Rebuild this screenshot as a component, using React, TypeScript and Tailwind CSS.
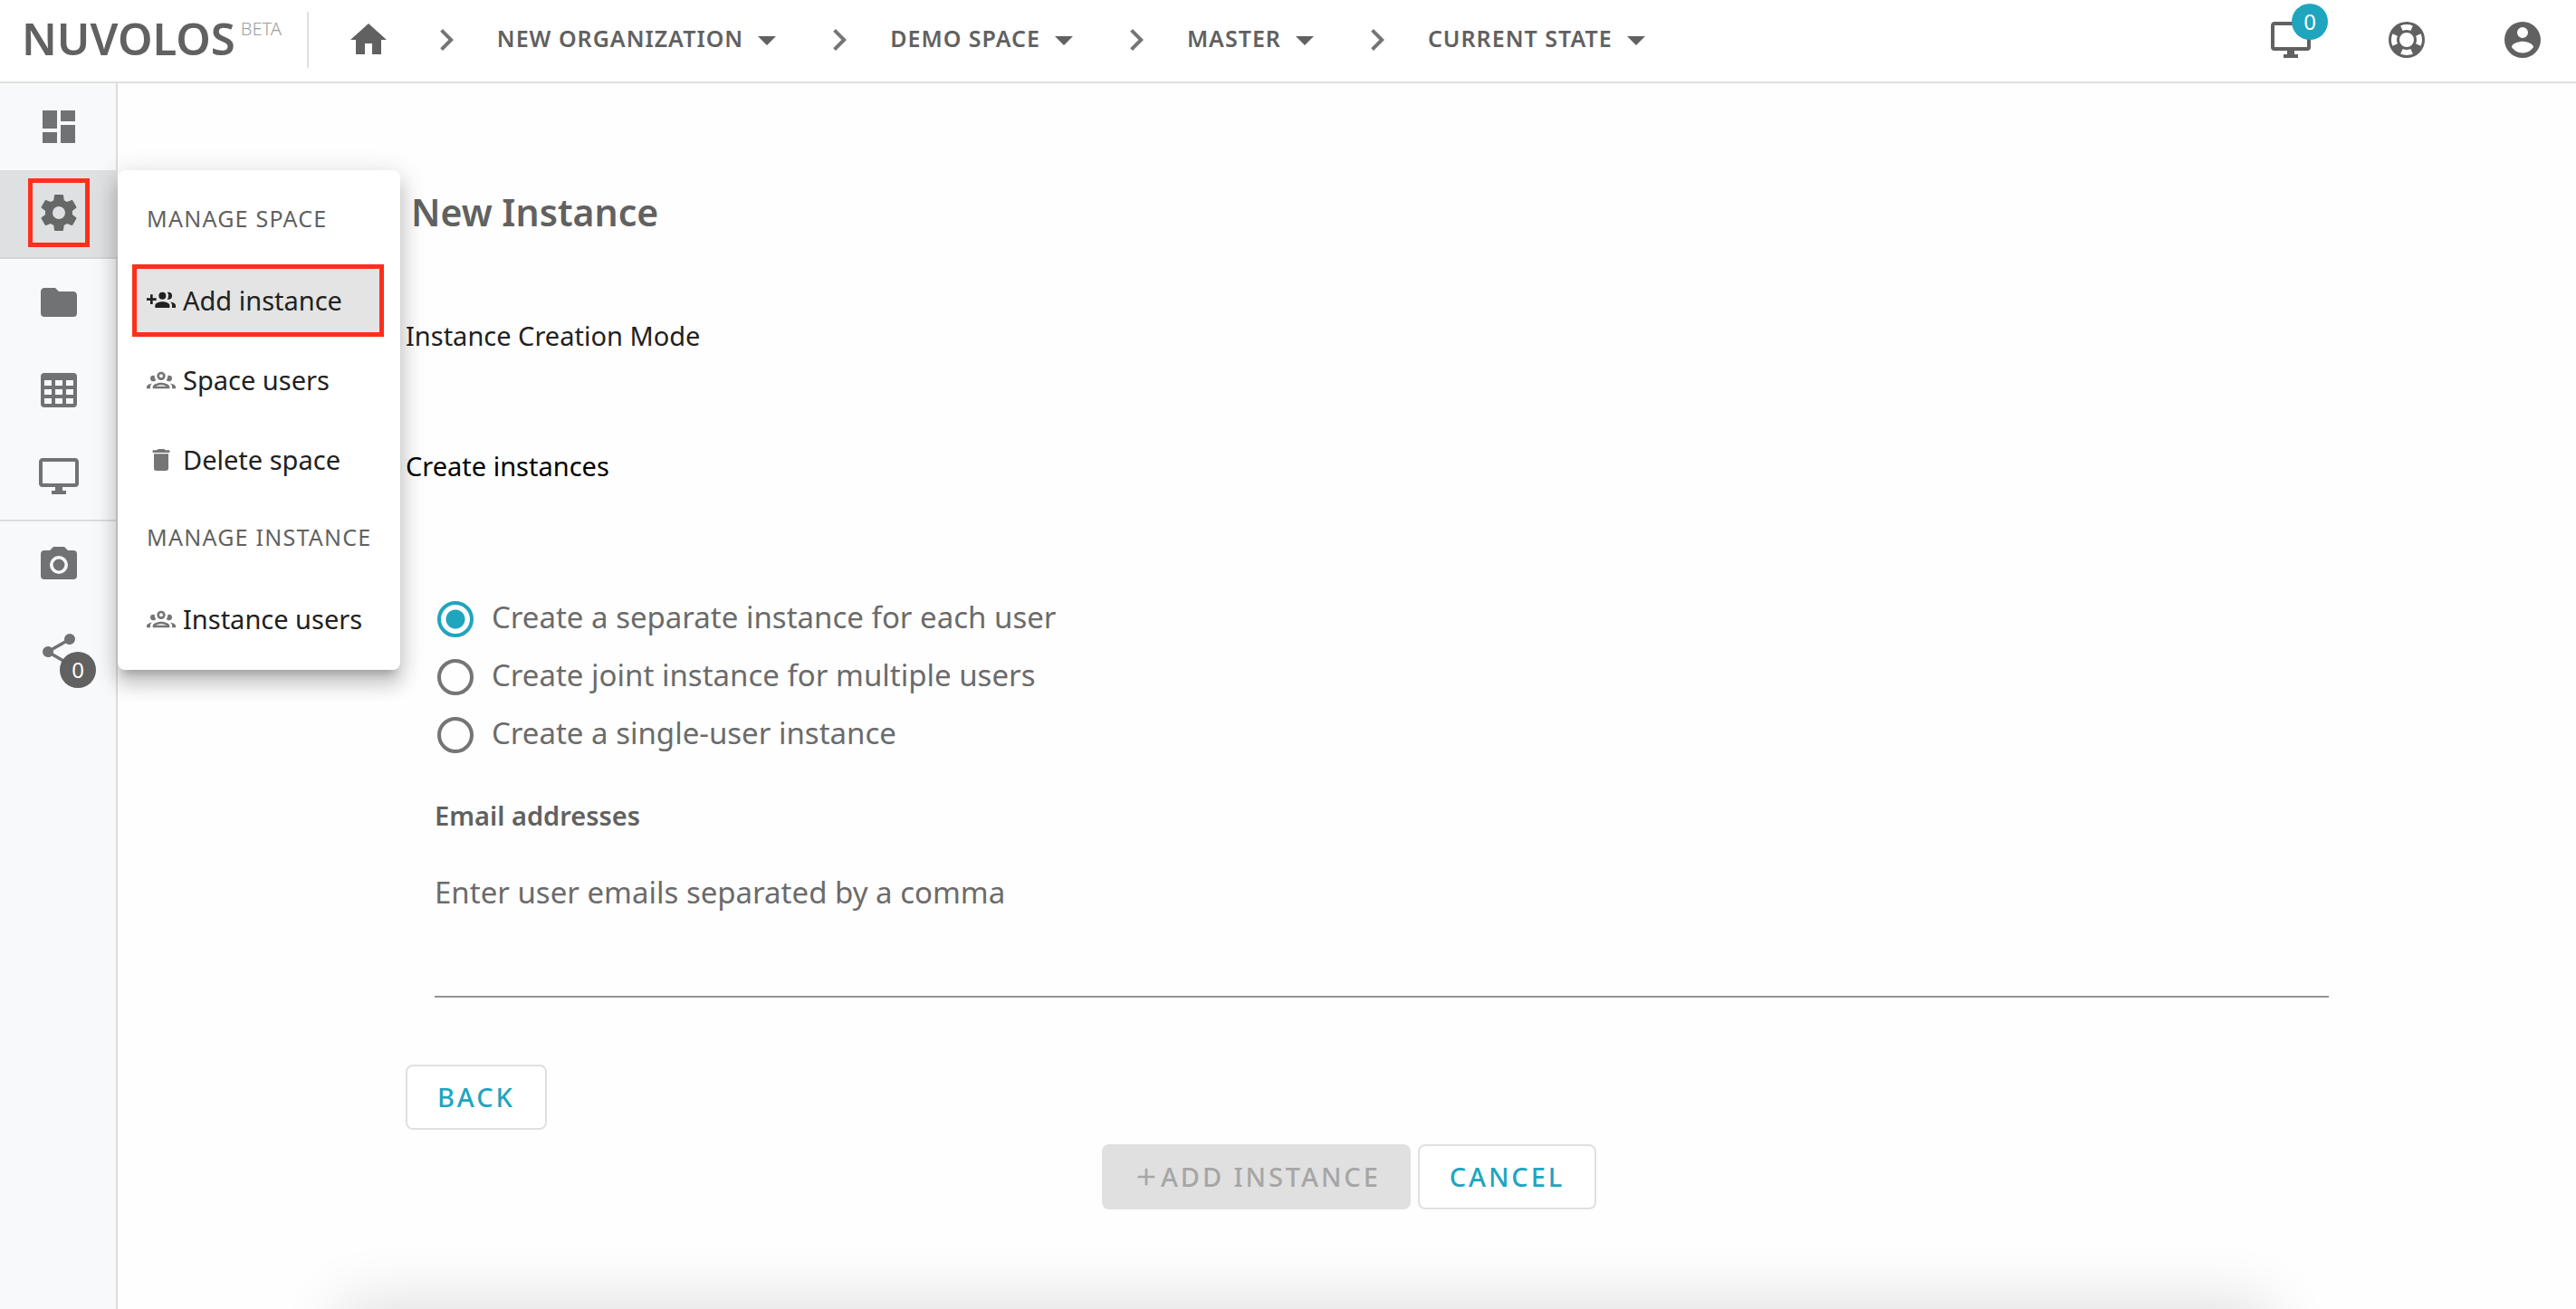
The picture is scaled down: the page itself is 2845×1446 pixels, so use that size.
import React, { useState } from "react";

const ICONS = {
  home: "M10,20V14H14V20H19V12H22L12,3L2,12H5V20H10Z",
  chevron: "M8.59,16.58L13.17,12L8.59,7.41L10,6L16,12L10,18L8.59,16.58Z",
  caret: "M7,10L12,15L17,10H7Z",
  plus: "M19,13H13V19H11V13H5V11H11V5H13V11H19V13Z",
  monitor:
    "M21,16H3V4H21M21,2H3C1.89,2 1,2.89 1,4V16A2,2 0 0,0 3,18H10V20H8V22H16V20H14V18H21A2,2 0 0,0 23,16V4C23,2.89 22.1,2 21,2Z",
  lifebuoy:
    "M19.79,15.41C20.74,13.24 20.74,10.74 19.79,8.59L17.05,9.83C17.65,11.21 17.65,12.78 17.06,14.17L19.79,15.41M15.42,4.21C13.25,3.26 10.76,3.26 8.59,4.21L9.83,6.94C11.22,6.35 12.79,6.35 14.18,6.95L15.42,4.21M4.21,8.58C3.26,10.76 3.26,13.24 4.21,15.42L6.95,14.17C6.35,12.79 6.35,11.21 6.95,9.82L4.21,8.58M8.59,19.79C10.76,20.74 13.25,20.74 15.42,19.78L14.18,17.05C12.8,17.65 11.22,17.65 9.84,17.06L8.59,19.79M12,2A10,10 0 0,1 22,12A10,10 0 0,1 12,22A10,10 0 0,1 2,12A10,10 0 0,1 12,2M12,8A4,4 0 0,0 8,12A4,4 0 0,0 12,16A4,4 0 0,0 16,12A4,4 0 0,0 12,8Z",
  account:
    "M12,19.2C9.5,19.2 7.29,17.92 6,16C6.03,14 10,12.9 12,12.9C14,12.9 17.97,14 18,16C16.71,17.92 14.5,19.2 12,19.2M12,5A3,3 0 0,1 15,8A3,3 0 0,1 12,11A3,3 0 0,1 9,8A3,3 0 0,1 12,5M12,2A10,10 0 0,0 2,12A10,10 0 0,0 12,22A10,10 0 0,0 22,12C22,6.47 17.5,2 12,2Z",
  dashboard: "M13,3V9H21V3M13,21H21V11H13M3,21H11V15H3M3,13H11V3H3V13Z",
  cog: "M12,15.5A3.5,3.5 0 0,1 8.5,12A3.5,3.5 0 0,1 12,8.5A3.5,3.5 0 0,1 15.5,12A3.5,3.5 0 0,1 12,15.5M19.43,12.97C19.47,12.65 19.5,12.33 19.5,12C19.5,11.67 19.47,11.34 19.43,11L21.54,9.37C21.73,9.22 21.78,8.95 21.66,8.73L19.66,5.27C19.54,5.05 19.27,4.96 19.05,5.05L16.56,6.05C16.04,5.66 15.5,5.32 14.87,5.07L14.5,2.42C14.46,2.18 14.25,2 14,2H10C9.75,2 9.54,2.18 9.5,2.42L9.13,5.07C8.5,5.32 7.96,5.66 7.44,6.05L4.95,5.05C4.73,4.96 4.46,5.05 4.34,5.27L2.34,8.73C2.21,8.95 2.27,9.22 2.46,9.37L4.57,11C4.53,11.34 4.5,11.67 4.5,12C4.5,12.33 4.53,12.65 4.57,12.97L2.46,14.63C2.27,14.78 2.21,15.05 2.34,15.27L4.34,18.73C4.46,18.95 4.73,19.03 4.95,18.95L7.44,17.94C7.96,18.34 8.5,18.68 9.13,18.93L9.5,21.58C9.54,21.82 9.75,22 10,22H14C14.25,22 14.46,21.82 14.5,21.58L14.87,18.93C15.5,18.67 16.04,18.34 16.56,17.94L19.05,18.95C19.27,19.03 19.54,18.95 19.66,18.73L21.66,15.27C21.78,15.05 21.73,14.78 21.54,14.63L19.43,12.97Z",
  folder:
    "M10,4H4C2.89,4 2,4.89 2,6V18A2,2 0 0,0 4,20H20A2,2 0 0,0 22,18V8C22,6.89 21.1,6 20,6H12L10,4Z",
  table:
    "M4,3H20A2,2 0 0,1 22,5V20A2,2 0 0,1 20,22H4A2,2 0 0,1 2,20V5A2,2 0 0,1 4,3M4,7V10H8V7H4M10,7V10H14V7H10M20,10V7H16V10H20M4,12V15H8V12H4M4,20H8V17H4V20M10,12V15H14V12H10M10,20H14V17H10V20M20,20V17H16V20H20M20,12H16V15H20V12Z",
  camera:
    "M4,4H7L9,2H15L17,4H20A2,2 0 0,1 22,6V18A2,2 0 0,1 20,20H4A2,2 0 0,1 2,18V6A2,2 0 0,1 4,4M12,7A5,5 0 0,0 7,12A5,5 0 0,0 12,17A5,5 0 0,0 17,12A5,5 0 0,0 12,7M12,8.8A3.2,3.2 0 0,1 15.2,12A3.2,3.2 0 0,1 12,15.2A3.2,3.2 0 0,1 8.8,12A3.2,3.2 0 0,1 12,8.8Z",
  share:
    "M18,16.08C17.24,16.08 16.56,16.38 16.04,16.85L8.91,12.7C8.96,12.47 9,12.24 9,12C9,11.76 8.96,11.53 8.91,11.3L15.96,7.19C16.5,7.69 17.21,8 18,8A3,3 0 0,0 21,5A3,3 0 0,0 18,2A3,3 0 0,0 15,5C15,5.24 15.04,5.47 15.09,5.7L8.04,9.81C7.5,9.31 6.79,9 6,9A3,3 0 0,0 3,12A3,3 0 0,0 6,15C6.79,15 7.5,14.69 8.04,14.19L15.16,18.34C15.11,18.55 15.08,18.77 15.08,19C15.08,20.61 16.39,21.91 18,21.91C19.61,21.91 20.92,20.61 20.92,19A2.92,2.92 0 0,0 18,16.08Z",
  groupAdd:
    "M13,13C11,13 7,14 7,16V18H19V16C19,14 15,13 13,13M19.62,13.16C20.45,13.88 21,14.82 21,16V18H24V16C24,14.46 21.63,13.5 19.62,13.16M13,11A3,3 0 1,0 10,8A3,3 0 0,0 13,11M18,11A3,3 0 0,0 18,5A2.92,2.92 0 0,0 17.11,5.14A5,5 0 0,1 17.11,10.86A2.92,2.92 0 0,0 18,11M8,10H5V7H3V10H0V12H3V15H5V12H8Z",
  group:
    "M12,5A3.5,3.5 0 0,0 8.5,8.5A3.5,3.5 0 0,0 12,12A3.5,3.5 0 0,0 15.5,8.5A3.5,3.5 0 0,0 12,5M12,7A1.5,1.5 0 0,1 13.5,8.5A1.5,1.5 0 0,1 12,10A1.5,1.5 0 0,1 10.5,8.5A1.5,1.5 0 0,1 12,7M5.5,8A2.5,2.5 0 0,0 3,10.5C3,11.44 3.53,12.25 4.29,12.68C4.65,12.88 5.06,13 5.5,13C5.94,13 6.35,12.88 6.71,12.68C7.08,12.47 7.39,12.17 7.62,11.81C6.89,10.86 6.5,9.7 6.5,8.5C6.5,8.41 6.5,8.31 6.5,8.22C6.2,8.08 5.86,8 5.5,8M18.5,8C18.14,8 17.8,8.08 17.5,8.22C17.5,8.31 17.5,8.41 17.5,8.5C17.5,9.7 17.11,10.86 16.38,11.81C16.5,12 16.63,12.15 16.78,12.3C16.94,12.45 17.1,12.58 17.29,12.68C17.65,12.88 18.06,13 18.5,13C18.94,13 19.35,12.88 19.71,12.68C20.47,12.25 21,11.44 21,10.5A2.5,2.5 0 0,0 18.5,8M12,14C9.66,14 5,15.17 5,17.5V19H19V17.5C19,15.17 14.34,14 12,14M4.71,14.55C2.78,14.78 0,15.76 0,17.5V19H3V17.07C3,16.06 3.69,15.22 4.71,14.55M19.29,14.55C20.31,15.22 21,16.06 21,17.07V19H24V17.5C24,15.76 21.22,14.78 19.29,14.55M12,16C13.53,16 15.24,16.5 16.23,17H7.77C8.76,16.5 10.47,16 12,16Z",
  trash:
    "M19,4H15.5L14.5,3H9.5L8.5,4H5V6H19M6,19A2,2 0 0,0 8,21H16A2,2 0 0,0 18,19V7H6V19Z",
};

type IconName = keyof typeof ICONS;

function Icon({ name, className = "size-12" }: { name: IconName; className?: string }) {
  return (
    <svg viewBox="0 0 24 24" fill="currentColor" aria-hidden="true" className={`shrink-0 ${className}`}>
      <path d={ICONS[name]} />
    </svg>
  );
}

function Crumb({ label }: { label: string }) {
  return (
    <>
      <Icon name="chevron" className="size-12 text-[#757575]" />
      <button
        type="button"
        className="flex items-center gap-0.5 text-[25px] leading-[36px] font-semibold tracking-[1px] whitespace-nowrap"
      >
        <span className="pb-1">{label}</span>
        <Icon name="caret" />
      </button>
    </>
  );
}

function Header() {
  return (
    <header className="flex h-[92px] shrink-0 items-center border-b-2 border-[#e0e0e0] bg-white pr-[35px] pb-0.5 text-[#616161]">
      <a href="#home" className="flex items-start pb-1 pl-6">
        <span className="text-[49px] leading-[48px] font-semibold">NUVOLOS</span>
        <span className="mt-1 ml-1.5 text-[20px] leading-[20px] font-light text-[#9e9e9e]">BETA</span>
      </a>
      <div className="ml-7 h-[62px] w-0.5 bg-[#e0e0e0]" />
      <nav aria-label="Breadcrumb" className="ml-[42px] flex items-center gap-8">
        <button type="button" aria-label="Home" className="mr-1.5">
          <Icon name="home" />
        </button>
        <Crumb label="NEW ORGANIZATION" />
        <Crumb label="DEMO SPACE" />
        <Crumb label="MASTER" />
        <Crumb label="CURRENT STATE" />
      </nav>
      <div className="ml-auto flex items-center gap-20">
        <button type="button" aria-label="Running applications" className="relative">
          <Icon name="monitor" />
          <span className="absolute -top-4 left-[25px] flex size-10 items-center justify-center rounded-full bg-[#20a5bf] text-[24px] leading-[24px] text-white">
            0
          </span>
        </button>
        <button type="button" aria-label="Help">
          <Icon name="lifebuoy" />
        </button>
        <button type="button" aria-label="Account">
          <Icon name="account" />
        </button>
      </div>
    </header>
  );
}

function SideButton({ icon, label, children }: { icon: IconName; label: string; children?: React.ReactNode }) {
  return (
    <button type="button" aria-label={label} className="flex h-24 w-full items-center justify-center pl-0.5">
      <span className="relative">
        <Icon name={icon} />
        {children}
      </span>
    </button>
  );
}

function MenuHeading({ children }: { children: string }) {
  return (
    <h2 className="flex h-20 items-center pb-1.5 pl-4 text-[25px] leading-[36px] tracking-wider whitespace-nowrap text-[#616161]">
      {children}
    </h2>
  );
}

function MenuItem({ icon, label, active = false }: { icon: IconName; label: string; active?: boolean }) {
  return (
    <button
      type="button"
      className={`mb-2 flex h-20 w-full items-center gap-2 text-[29px] leading-[40px] whitespace-nowrap text-[#212121] ${
        active ? "border-5 border-[#ff2f1c] bg-[#e4e4e4] pl-[11px]" : "rounded-lg pl-4"
      }`}
    >
      <Icon name={icon} className={active ? "size-8" : "size-8 text-[#757575]"} />
      {label}
    </button>
  );
}

function SpaceMenu() {
  return (
    <div className="absolute top-0 left-full z-20 w-[312px] rounded-lg bg-white pt-4 pr-[18px] pb-2 pl-4 shadow-[0_10px_10px_-6px_rgba(0,0,0,0.2),0_16px_20px_2px_rgba(0,0,0,0.14),0_6px_28px_4px_rgba(0,0,0,0.12)]">
      <MenuHeading>MANAGE SPACE</MenuHeading>
      <div className="h-2" />
      <MenuItem icon="groupAdd" label="Add instance" active />
      <MenuItem icon="group" label="Space users" />
      <MenuItem icon="trash" label="Delete space" />
      <MenuHeading>MANAGE INSTANCE</MenuHeading>
      <div className="h-2" />
      <MenuItem icon="group" label="Instance users" />
    </div>
  );
}

function Sidebar() {
  return (
    <aside className="z-10 flex w-[130px] shrink-0 flex-col border-r-2 border-[#dcdcdc] bg-[#f8f9fb] text-[#717274]">
      <SideButton icon="dashboard" label="Dashboard" />
      <div className="relative -mr-0.5 border-b-2 border-[#d4d5d7] bg-[#dee0e2]">
        <button type="button" aria-label="Settings" className="flex h-24 w-full items-center justify-center pb-0.5">
          <span className="flex h-19 w-17 items-center justify-center border-5 border-[#ff2f1c] text-[#666867]">
            <Icon name="cog" />
          </span>
        </button>
        <SpaceMenu />
      </div>
      <SideButton icon="folder" label="Files" />
      <SideButton icon="table" label="Tables" />
      <SideButton icon="monitor" label="Applications" />
      <div className="h-0.5 bg-[#dcdcdc]" />
      <SideButton icon="camera" label="Snapshots" />
      <SideButton icon="share" label="Distribute">
        <span className="absolute top-6 left-[25px] flex size-10 items-center justify-center rounded-full bg-[#616161] text-[24px] leading-[24px] text-white">
          0
        </span>
      </SideButton>
    </aside>
  );
}

const MODES = [
  "Create a separate instance for each user",
  "Create joint instance for multiple users",
  "Create a single-user instance",
];

function OutlineButton({ children }: { children: string }) {
  return (
    <button
      type="button"
      className="h-[72px] rounded-lg border-2 border-[#e0e0e0] bg-white px-[33px] text-[29px] leading-[40px] font-medium tracking-widest text-[#20a5bf]"
    >
      {children}
    </button>
  );
}

export default function App() {
  const [mode, setMode] = useState(0);
  return (
    <div className="flex min-h-screen flex-col bg-white font-['Noto_Sans',sans-serif]">
      <Header />
      <div className="flex flex-1">
        <Sidebar />
        <main className="relative flex-1 overflow-hidden bg-[#fefefe] pt-[118px] pr-[241px] pl-[318px]">
          <h1 className="pl-1.5 text-[41px] leading-[48px] font-semibold text-[#616161]">New Instance</h1>
          <p className="mt-[93px] text-[29px] leading-[40px] text-[#212121]">Instance Creation Mode</p>
          <p id="mode-title" className="mt-[104px] text-[29px] leading-[40px] text-black">
            Create instances
          </p>

          <form onSubmit={(e) => e.preventDefault()}>
            <div role="radiogroup" aria-labelledby="mode-title" className="mt-[117px] pl-[35px]">
              {MODES.map((label, i) => (
                <label key={label} className="flex h-16 items-center gap-5 text-[33px] leading-[44px] text-[#6b6b6b]">
                  <input
                    type="radio"
                    name="mode"
                    checked={mode === i}
                    onChange={() => setMode(i)}
                    className="size-10 appearance-none rounded-full border-4 border-[#757575] bg-transparent checked:border-[#20a5bf] checked:bg-[radial-gradient(circle,#20a5bf_10px,transparent_11px)]"
                  />
                  <span className="pb-1">{label}</span>
                </label>
              ))}
            </div>

            <div className="mt-[37px] flex flex-col px-8">
              <label htmlFor="emails" className="text-[29px] leading-[40px] font-semibold text-[#616161]">
                Email addresses
              </label>
              <textarea
                id="emails"
                placeholder="Enter user emails separated by a comma"
                className="mt-[43px] h-[138px] w-full resize-none border-b-2 border-[#949494] bg-transparent text-[33px] leading-[44px] text-[#212121] outline-none placeholder:text-[#6b6b6b]"
              />
            </div>

            <div className="mt-[74px] flex">
              <OutlineButton>BACK</OutlineButton>
            </div>
            <div className="mt-4 flex justify-center gap-2 pr-[72px]">
              <button
                type="submit"
                disabled
                className="flex h-[72px] items-center rounded-lg bg-[#e0e0e0] px-[33px] text-[29px] leading-[40px] font-medium tracking-widest text-[#a6a6a6]"
              >
                <Icon name="plus" className="size-8" />
                ADD INSTANCE
              </button>
              <OutlineButton>CANCEL</OutlineButton>
            </div>
          </form>

          <div className="pointer-events-none absolute top-full right-[340px] left-[248px] h-40 shadow-[0_-4px_70px_rgba(0,0,0,0.14)]" />
        </main>
      </div>
    </div>
  );
}
